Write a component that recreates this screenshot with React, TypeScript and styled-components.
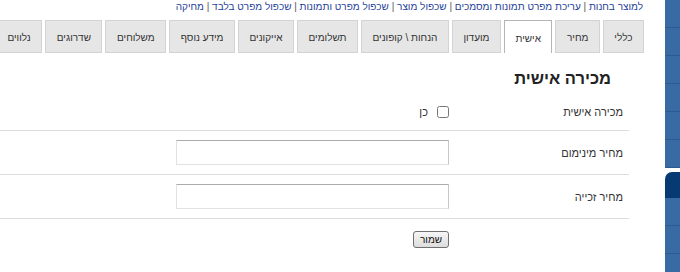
import React from "react";
import styled, { createGlobalStyle } from "styled-components";

const GlobalStyle = createGlobalStyle`
  html, body {
    margin: 0;
    padding: 0;
    background: #fff;
    font-family: "Liberation Sans", Arial, sans-serif;
    color: #333;
  }
`;

const PageSC = styled.div`
  direction: rtl;
  display: flex;
  width: 680px;
  height: 272px;
  overflow: hidden;
`;

const SideSC = styled.aside`
  flex: 0 0 15px;
  display: flex;
  flex-direction: column;
`;

const SideGroupSC = styled.div<{ gap?: number }>`
  margin-top: ${({ gap }) => gap || 0}px;
  display: flex;
  flex-direction: column;
`;

const SideItemSC = styled.div`
  height: 27px;
  background: #386ba3;
  border-bottom: 1px solid #2c5b8f;
`;

const SideHeadSC = styled.div`
  height: 26px;
  background: #053a72;
  border-top-left-radius: 7px;
`;

const MainSC = styled.main`
  flex: 1;
  min-width: 0;
  padding-right: 21px;
`;

const LinksSC = styled.div`
  height: 20px;
  padding-right: 1px;
  font-size: 10px;
  line-height: 13px;
  white-space: nowrap;
  color: #555;
`;

const LinkSC = styled.a`
  color: #1f3f99;
  text-decoration: none;
`;

const TabsSC = styled.div`
  display: flex;
  gap: 3px;
  height: 33px;
  overflow: hidden;
`;

const TabSC = styled.div<{ active?: boolean }>`
  flex: 0 0 auto;
  box-sizing: border-box;
  height: 33px;
  padding: 2px 10.5px 0;
  display: flex;
  align-items: center;
  font-size: 10px;
  white-space: nowrap;
  color: #333;
  background: ${({ active }) => (active ? "#fff" : "#e6e6e6")};
  border: 1px solid ${({ active }) => (active ? "#b5b5b5" : "#d3d3d3")};
  border-bottom: ${({ active }) => (active ? "none" : "1px solid #d3d3d3")};
`;

const FormSC = styled.section`
  padding-right: 15px;
`;

const HeadingSC = styled.h2`
  margin: 15px 18px 5px 0;
  font-size: 16.5px;
  line-height: 21px;
  font-weight: bold;
  color: #222;
`;

const RowSC = styled.div`
  display: flex;
  align-items: center;
  padding: 9px 0;
  min-height: 18px;
  border-bottom: 1px solid #dcdcdc;
`;

const LabelSC = styled.div`
  flex: 0 0 180px;
  box-sizing: border-box;
  padding-right: 6px;
  font-size: 11px;
  color: #333;
`;

const ValueSC = styled.div`
  display: flex;
  align-items: center;
`;

const CheckSC = styled.input`
  margin: 0;
  width: 12px;
  height: 12px;
`;

const CheckTextSC = styled.span`
  margin-right: 9px;
  font-size: 11px;
`;

const TextInputSC = styled.input`
  box-sizing: border-box;
  width: 273px;
  height: 25px;
  margin: 0;
  border: 1px solid;
  border-color: #acacac #c8c8c8 #e2e2e2 #e2e2e2;
  background: #fff;
`;

const ActionsSC = styled.div`
  padding: 10px 180px 0 0;
`;

const ButtonSC = styled.button`
  box-sizing: border-box;
  width: 36px;
  height: 17px;
  padding: 0;
  font-family: inherit;
  font-size: 10px;
  line-height: 13px;
  color: #111;
  background: linear-gradient(#f6f6f6, #dddddd);
  border: 1px solid #707070;
  border-radius: 3px;
`;

const links = [
  "למוצר בחנות",
  "עריכת מפרט תמונות ומסמכים",
  "שכפול מוצר",
  "שכפול מפרט ותמונות",
  "שכפול מפרט בלבד",
  "מחיקה",
];

const tabs = [
  "כללי",
  "מחיר",
  "אישית",
  "מועדון",
  "הנחות \\ קופונים",
  "תשלומים",
  "אייקונים",
  "מידע נוסף",
  "משלוחים",
  "שדרוגים",
  "נלווים",
  "קשורים",
];

export default function App() {
  return (
    <>
      <GlobalStyle />
      <PageSC>
        <SideSC>
          <SideGroupSC>
            {Array.from({ length: 6 }).map((_, i) => (
              <SideItemSC key={i} />
            ))}
          </SideGroupSC>
          <SideGroupSC gap={4}>
            <SideHeadSC />
            {Array.from({ length: 3 }).map((_, i) => (
              <SideItemSC key={i} />
            ))}
          </SideGroupSC>
        </SideSC>
        <MainSC>
          <LinksSC>
            {links.map((l, i) => (
              <React.Fragment key={l}>
                {i > 0 && " | "}
                <LinkSC href="#">{l}</LinkSC>
              </React.Fragment>
            ))}
          </LinksSC>
          <TabsSC>
            {tabs.map((t) => (
              <TabSC key={t} active={t === "אישית"}>
                {t}
              </TabSC>
            ))}
          </TabsSC>
          <FormSC>
            <HeadingSC>מכירה אישית</HeadingSC>
            <RowSC>
              <LabelSC>מכירה אישית</LabelSC>
              <ValueSC>
                <CheckSC type="checkbox" />
                <CheckTextSC>כן</CheckTextSC>
              </ValueSC>
            </RowSC>
            <RowSC>
              <LabelSC>מחיר מינימום</LabelSC>
              <ValueSC>
                <TextInputSC type="text" />
              </ValueSC>
            </RowSC>
            <RowSC>
              <LabelSC>מחיר זכייה</LabelSC>
              <ValueSC>
                <TextInputSC type="text" />
              </ValueSC>
            </RowSC>
            <ActionsSC>
              <ButtonSC>שמור</ButtonSC>
            </ActionsSC>
          </FormSC>
        </MainSC>
      </PageSC>
    </>
  );
}
